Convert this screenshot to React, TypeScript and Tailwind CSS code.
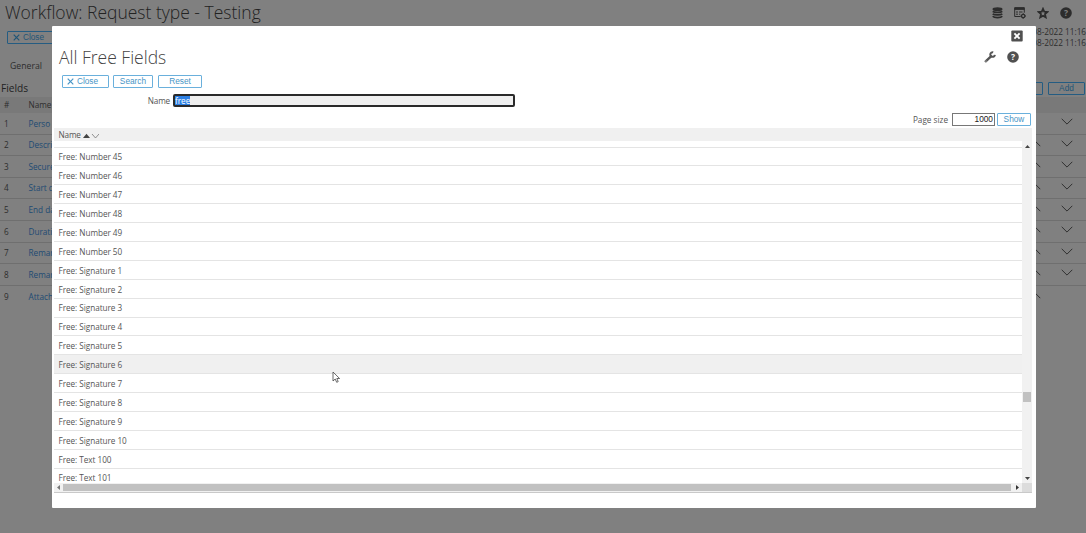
import React from "react";

const fieldRows = ["Perso", "Descri", "Secure", "Start d", "End da", "Durati", "Remar", "Remar", "Attach"];

const freeFields = [
  ...[45, 46, 47, 48, 49, 50].map((n) => `Free: Number ${n}`),
  ...[1, 2, 3, 4, 5, 6, 7, 8, 9, 10].map((n) => `Free: Signature ${n}`),
  "Free: Text 100",
  "Free: Text 101",
];

function Cross() {
  return (
    <svg className="h-[7px] w-[7px]" viewBox="0 0 7 7" fill="none" stroke="currentColor" strokeWidth="1.2">
      <path d="M.7.7 6.3 6.3M6.3.7.7 6.3" />
    </svg>
  );
}

function Chevron({ up = false }: { up?: boolean }) {
  return (
    <svg className="h-[7px] w-[12px]" viewBox="0 0 12 7" fill="none" stroke="#303030" strokeWidth="1">
      <path d={up ? "M.7 6.2 6 .9l5.3 5.3" : "M.7.8 6 6.1 11.3.8"} />
    </svg>
  );
}

function Help({ fill, ink }: { fill: string; ink: string }) {
  return (
    <svg className="h-[12px] w-[12px]" viewBox="0 0 12 12">
      <circle cx="6" cy="6" r="5.8" fill={fill} />
      <text x="6" y="9" textAnchor="middle" fontSize="8.5" fill={ink} className="font-['Open_Sans',sans-serif] font-bold">?</text>
    </svg>
  );
}

function DatabaseIcon() {
  return (
    <svg className="h-[12px] w-[11px]" viewBox="0 0 11 12" fill="none" stroke="#2c2c2c">
      <ellipse cx="5.5" cy="2.2" rx="5" ry="1.9" fill="#2c2c2c" stroke="none" />
      <path d="M.7 4.300C2.200 5.700 8.800 5.700 10.300 4.300M.7 6.800C2.200 8.200 8.800 8.200 10.300 6.800M.7 9.300C2.200 11.100 8.800 11.100 10.300 9.300" strokeWidth="1.700" />
    </svg>
  );
}

function FormGearIcon() {
  return (
    <svg className="h-[12px] w-[12px]" viewBox="0 0 12 12" fill="none" stroke="#2c2c2c">
      <path d="M6.500 9.500H.7V.7h9.600v5" strokeWidth="1" />
      <path d="M.5 1.700h10" strokeWidth="2.400" />
      <path d="M2 5h2M2 7.200h2M5 5h3.500M5 7.200h1.300" strokeWidth="1" />
      <circle cx="9.200" cy="9" r="1.700" strokeWidth="1.300" />
      <path d="M9.200 6.200v1M9.200 10.800v1M6.400 9h1M11 9h1" strokeWidth="1" />
    </svg>
  );
}

function StarIcon() {
  return (
    <svg className="h-[12px] w-[12px]" viewBox="0 0 12 12" fill="none" stroke="#2c2c2c" strokeWidth="1.800">
      <path d="m6 1.900 1.200 2.800 3.200.3-2.400 2.100.7 3.200L6 8.700l-2.700 1.600.7-3.200L1.600 5l3.200-.3z" />
    </svg>
  );
}

function WrenchIcon() {
  return (
    <svg className="h-[12px] w-[12px]" viewBox="0 0 12 12" fill="none" stroke="#555">
      <path d="M1.700 10.300 7 5.300" strokeWidth="2.400" strokeLinecap="round" />
      <path d="M9.200 1.300A2.300 2.300 0 1 0 10.900 3.800" strokeWidth="2" />
      <circle cx="2" cy="10" r=".5" fill="#fff" stroke="none" />
    </svg>
  );
}

function Button({ children, className = "" }: { children: React.ReactNode; className?: string }) {
  return (
    <button
      className={`flex h-[13px] shrink-0 items-center justify-center rounded-[1px] border font-['Liberation_Sans',sans-serif] text-[8.3px] leading-none ${className}`}
    >
      {children}
    </button>
  );
}

function Page() {
  return (
    <div className="flex h-full flex-col bg-[#808080] text-[#2d2d2d]">
      <header className="flex h-[25px] shrink-0 items-center justify-between pr-[14px] pl-[5px]">
        <h1 className="text-[17.5px] leading-[25px] font-light whitespace-nowrap text-[#222]">Workflow: Request type - Testing</h1>
        <div className="flex items-center gap-[11px]">
          <DatabaseIcon />
          <FormGearIcon />
          <StarIcon />
          <Help fill="#2c2c2c" ink="#808080" />
        </div>
      </header>
      <div className="flex h-[35px] shrink-0 justify-between">
        <Button className="mt-[6px] ml-[7px] w-[48px] gap-[3px] border-[#245c82] pr-[9px] pl-[4px] text-[#1f5577]"><Cross />Close</Button>
        <div className="pt-[2px] text-right text-[8.2px] leading-[10.5px] whitespace-nowrap">
          <div>29-08-2022 11:16</div>
          <div>29-08-2022 11:16</div>
        </div>
      </div>
      <div className="h-[20px] shrink-0 pl-[10px] text-[8.7px] leading-[12px]">General</div>
      <div className="flex h-[17px] shrink-0 items-center justify-between">
        <h2 className="pl-[1px] text-[10.2px] leading-[15px] text-[#222]">Fields</h2>
        <div className="mr-px flex gap-[5px]">
          <Button className="w-[36px] border-[#245c82] text-[#1f5577]">Edit</Button>
          <Button className="w-[37px] border-[#245c82] text-[#1f5577]">Add</Button>
        </div>
      </div>
      <div className="flex h-[16px] shrink-0 items-center bg-[#797979] pt-px pl-[4px] text-[8.2px]">
        <span className="w-[24.5px]">#</span>
        <span>Name</span>
      </div>
      {fieldRows.map((name, i) => (
        <div
          key={i}
          className={`flex h-[21.6px] shrink-0 items-center border-[#6f6f6f] pt-px pl-[4px] text-[8.2px] ${i < 8 ? "border-b" : ""}`}
        >
          <span className="w-[24.5px]">{i + 1}</span>
          <span className="text-[#1d4a73]">{name}</span>
          <div className="mr-[13px] ml-auto flex w-[44px] -translate-y-[2px] items-center justify-between">
            {i > 0 && <Chevron up />}
            {i < 8 && <span className="ml-auto"><Chevron /></span>}
          </div>
        </div>
      ))}
    </div>
  );
}

function Dialog() {
  return (
    <section className="absolute top-[26px] left-[52px] flex h-[482px] w-[984px] flex-col rounded-[1px] bg-white text-[#555]">
      <div className="flex h-[20px] shrink-0 justify-end pt-[4px] pr-[13px]">
        <svg className="h-[12px] w-[12px]" viewBox="0 0 12 12">
          <rect x=".3" y=".5" width="11.400" height="11" rx="1" fill="#505050" />
          <path d="m3.400 3.400 5.200 5.200m0-5.200L3.400 8.600" stroke="#fff" strokeWidth="1.900" />
        </svg>
      </div>
      <div className="flex h-[29px] shrink-0 items-start justify-between pr-[17px] pl-[7px]">
        <h1 className="text-[17.5px] leading-[23px] font-light whitespace-nowrap text-[#444]">All Free Fields</h1>
        <div className="flex gap-[11px] pt-[5px]">
          <WrenchIcon />
          <Help fill="#505050" ink="#fff" />
        </div>
      </div>
      <div className="flex h-[19px] shrink-0 gap-[5px] pl-[10px]">
        <Button className="w-[47px] gap-[3px] border-[#6ab0dc] pr-[9px] pl-[3px] text-[#4795c6]"><Cross />Close</Button>
        <Button className="-ml-px w-[40px] border-[#6ab0dc] text-[#4795c6]">Search</Button>
        <Button className="w-[44px] border-[#6ab0dc] text-[#4795c6]">Reset</Button>
      </div>
      <div className="flex h-[19px] shrink-0 items-start">
        <label className="w-[118px] text-right text-[8.2px] leading-[13px] tracking-[-0.02em]">Name</label>
        <div className="ml-[3px] flex h-[13px] w-[342px] items-center rounded-[2px] border-2 border-[#2a2a2a] bg-[#efefef]">
          <span className="bg-[#2d80e4] text-[8.2px] leading-[9px] text-white">free</span>
        </div>
      </div>
      <div className="flex h-[13px] shrink-0 items-center justify-end pr-[5px] text-[8.2px]">
        <span className="leading-[12px]">Page size</span>
        <div className="ml-[4px] flex h-[13px] w-[43px] items-center justify-end border border-[#777] pr-[1px] font-['Liberation_Sans',sans-serif] text-[8.3px] text-[#222]">1000</div>
        <Button className="ml-[2px] w-[34px] border-[#6ab0dc] text-[#4795c6]">Show</Button>
      </div>
      <div className="mt-[2px] mr-[4px] ml-[2px] flex h-[13px] shrink-0 items-center bg-[#f0f0f0] pt-px pl-[4.5px] text-[8.2px] tracking-[-0.02em]">
        Name
        <svg className="mt-[2px] ml-[2px] h-[6px] w-[16px]" viewBox="0 0 16 6">
          <path d="M0 5 3.500.8 7 5z" fill="#444" />
          <path d="m9 1 3.500 4L16 1" fill="none" stroke="#777" strokeWidth=".8" />
        </svg>
      </div>
      <div className="mr-[4px] ml-[2px] flex h-[342px] shrink-0 overflow-hidden">
        <div className="min-w-0 flex-1 overflow-hidden">
          <div className="h-[6.5px] border-b border-[#e4e4e4]" />
          {freeFields.map((name) => (
            <div
              key={name}
              className={`flex h-[18.9px] items-center border-b border-[#e4e4e4] pt-[2px] pl-[4.5px] text-[8.2px] tracking-[-0.005em] whitespace-nowrap ${name === "Free: Signature 6" ? "bg-[#f0f0f0]" : ""}`}
            >
              {name}
            </div>
          ))}
        </div>
        <div className="flex w-[10px] flex-col items-center bg-[#f1f1f1] pt-[4px] pb-[3px]">
          <svg className="h-[3px] w-[5px]" viewBox="0 0 5 3" fill="#444"><path d="M0 3 2.500 0 5 3z" /></svg>
          <div className="mt-[244px] h-[10px] w-[8px] bg-[#c1c1c1]" />
          <svg className="mt-auto h-[3px] w-[5px]" viewBox="0 0 5 3" fill="#444"><path d="M0 0h5L2.500 3z" /></svg>
        </div>
      </div>
      <div className="mr-[4px] ml-[2px] flex h-[10px] shrink-0 items-center border-b border-[#c9c9c9] bg-[#f1f1f1]">
        <svg className="ml-[3px] h-[5px] w-[3px]" viewBox="0 0 3 5" fill="#777"><path d="M3 0v5L0 2.500z" /></svg>
        <div className="ml-[3px] h-[7px] w-[948px] bg-[#c1c1c1]" />
        <svg className="ml-[5px] h-[5px] w-[3px]" viewBox="0 0 3 5" fill="#333"><path d="M0 0v5l3-2.500z" /></svg>
        <div className="ml-auto h-full w-[10px] bg-[#dcdcdc]" />
      </div>
    </section>
  );
}

export default function App() {
  return (
    <div className="relative h-[533px] w-[1086px] overflow-hidden font-['Open_Sans',sans-serif]">
      <Page />
      <Dialog />
      <svg className="absolute top-[371px] left-[332px] h-[12px] w-[8px]" viewBox="0 0 8 12">
        <path d="M1 1v9l2.200-2 1.500 3.300 1.500-.7-1.400-3.100h2.800z" fill="#fff" stroke="#444" strokeWidth=".8" />
      </svg>
    </div>
  );
}
